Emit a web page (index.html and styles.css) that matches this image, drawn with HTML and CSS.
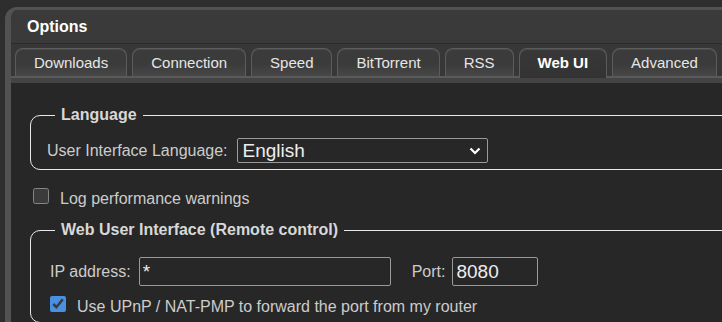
FILE: index.html
```html
<!DOCTYPE html>
<html lang="en">
<head>
    <meta charset="UTF-8">
    <title>Options</title>
    <link rel="stylesheet" href="styles.css">
</head>
<body>
    <div class="window">
        <div class="titlebar">Options</div>

        <ul class="tabs">
            <li class="tab">Downloads</li>
            <li class="tab">Connection</li>
            <li class="tab">Speed</li>
            <li class="tab">BitTorrent</li>
            <li class="tab">RSS</li>
            <li class="tab active">Web UI</li>
            <li class="tab">Advanced</li>
        </ul>

        <div class="panel">
            <fieldset>
                <legend>Language</legend>
                <div class="row">
                    <label for="locale">User Interface Language:</label>
                    <div class="select">
                        <select id="locale">
                            <option>English</option>
                        </select>
                        <svg class="chevron" width="12" height="8" viewBox="0 0 12 8">
                            <path d="M1.5 1.5 L6 6 L10.5 1.5" fill="none" stroke="#fff" stroke-width="2.2"/>
                        </svg>
                    </div>
                </div>
            </fieldset>

            <label class="check">
                <input type="checkbox">
                <span>Log performance warnings</span>
            </label>

            <fieldset class="webui">
                <legend>Web User Interface (Remote control)</legend>
                <div class="row address">
                    <label for="ip">IP address:</label>
                    <input id="ip" class="text ip" type="text" value="*">
                    <label for="port" class="port-label">Port:</label>
                    <input id="port" class="text port" type="text" value="8080">
                </div>
                <label class="check upnp">
                    <input type="checkbox" checked>
                    <span>Use UPnP / NAT-PMP to forward the port from my router</span>
                </label>
            </fieldset>
        </div>
    </div>
</body>
</html>
```

FILE: styles.css
```css
:root {
    color-scheme: dark;
}

* {
    box-sizing: border-box;
}

body {
    margin: 0;
    padding: 7px 0 0 5px;
    height: 322px;
    overflow: hidden;
    background: #2e2e2e;
    font-family: "Liberation Sans", Arial, sans-serif;
}

.window {
    width: 800px;
    height: 330px;
    display: flex;
    flex-direction: column;
    background: #272727;
    border: solid #525252;
    border-width: 3px 0 0 6px;
    border-radius: 12px 0 0 0;
    overflow: hidden;
}

.titlebar {
    height: 34px;
    line-height: 33px;
    padding-left: 16px;
    background: #3a3a3a;
    border-bottom: 1px solid #2a2a2a;
    color: #fff;
    font-size: 16px;
    font-weight: bold;
}

.tabs {
    list-style: none;
    margin: 0;
    height: 39px;
    padding: 4px 0 0 4px;
    display: flex;
    align-items: flex-start;
    gap: 5px;
    background: linear-gradient(to bottom, #373737 0 32px, #5a5a5a 32px 34px, #444 34px);
}

.tab {
    height: 28px;
    line-height: 28px;
    padding: 0 18px;
    border: 1px solid #5c5c5c;
    border-bottom: none;
    border-radius: 8px 8px 0 0;
    background: linear-gradient(#3b3b3b, #3b3b3b 55%, #474747);
    box-shadow: inset 0 1px 0 #4a4a4a;
    color: #e6e6e6;
    font-size: 15px;
    white-space: nowrap;
}

.tab.active {
    height: 30px;
    color: #fff;
    font-weight: bold;
    background: linear-gradient(#383838, #333);
}

.panel {
    flex: 1;
    padding: 23px 0 0 19px;
}

fieldset {
    margin: 0;
    min-width: 0;
    padding: 14px 16px 6px;
    border: 1px solid #e8e8e8;
    border-radius: 10px;
}

legend {
    margin-left: 8px;
    padding: 0 6px;
    line-height: 18px;
    color: #d8d8d8;
    font-size: 16px;
    font-weight: bold;
}

.row {
    display: flex;
    align-items: center;
    height: 25px;
    color: #cccccc;
    font-size: 16px;
}

.select {
    position: relative;
    width: 251px;
    height: 25px;
    margin-left: 9px;
}

.select select {
    appearance: none;
    width: 100%;
    height: 100%;
    padding: 0 0 0 5px;
    background: #272727;
    border: 1px solid #9a9a9a;
    border-radius: 2px;
    color: #eeeeee;
    font: 19px "Liberation Sans", Arial, sans-serif;
}

.chevron {
    position: absolute;
    right: 7px;
    top: 9px;
    pointer-events: none;
}

.check {
    display: flex;
    align-items: center;
    height: 24px;
    margin-top: 14px;
    color: #cccccc;
    font-size: 16px;
}

.check span {
    padding-top: 6px;
}

.check input {
    width: 16px;
    height: 16px;
    margin: 0 11px 0 3px;
    accent-color: #4a90e2;
}

.webui {
    margin-top: 13px;
    padding-top: 18px;
}

.row.address {
    height: 29px;
    padding-left: 3px;
}

.text {
    height: 29px;
    padding: 0 3px;
    background: #272727;
    border: 1px solid #9a9a9a;
    border-radius: 2px;
    color: #eeeeee;
    font: 19px "Liberation Sans", Arial, sans-serif;
}

.ip {
    width: 252px;
    margin-left: 8px;
}

.port-label {
    margin-left: 21px;
}

.port {
    width: 86px;
    margin-left: 7px;
}

.check.upnp {
    margin-top: 6px;
}
```
